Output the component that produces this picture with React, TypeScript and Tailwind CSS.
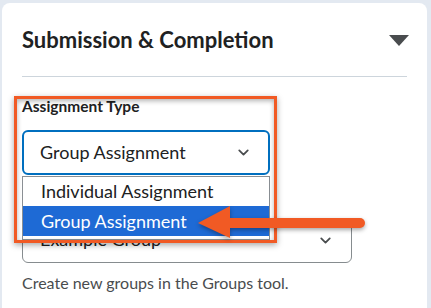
import { ChevronDown } from "lucide-react";

export default function App() {
  return (
    <div className="w-[431px] h-[308px] overflow-hidden bg-[#e3e9f1] pt-[3px] pl-[2px] pr-[4px] font-['Lato','Liberation_Sans',sans-serif] text-[#202122]">
      <div className="relative bg-white rounded-t-[8px] h-[320px] px-5">
        {/* header */}
        <div className="flex items-center justify-between h-[73px]">
          <h2 className="text-[22px] leading-[28px] font-bold">Submission &amp; Completion</h2>
          <svg width="20" height="11" viewBox="0 0 20 11" className="mr-[-2px] mt-[2px]">
            <polygon points="0,0 20,0 10,11" fill="#494c4e" />
          </svg>
        </div>
        <div className="h-px bg-[#cdd5dc]" />

        {/* assignment type */}
        <div className="mt-[19px] text-[15.5px] leading-[20px] font-bold">Assignment Type</div>
        <div className="mt-[14px] w-[248px] h-[45px] border-2 border-[#006fbf] rounded-[6px] flex items-center justify-between pl-[16px] pr-[16px] text-[18px]">
          <span>Group Assignment</span>
          <ChevronDown size={17} strokeWidth={2.5} className="text-[#494c4e]" />
        </div>

        {/* group category (covered by dropdown) */}
        <div className="mt-[10px] text-[15.5px] leading-[20px] font-bold">Group Category</div>
        <div className="mt-[13px] w-[330px] h-[45px] border border-[#868c8f] rounded-[6px] flex items-center justify-between pl-[17px] pr-[17px] text-[18px]">
          <span className="mt-[-2px]">Example Group</span>
          <ChevronDown size={17} strokeWidth={2.5} className="text-[#494c4e]" />
        </div>
        <p className="mt-[10px] text-[16px] leading-[20px] text-[#494c4e]">Create new groups in the Groups tool.</p>

        {/* open list */}
        <div className="absolute left-[20px] top-[173px] w-[248px] bg-white border border-[#8a8f94] text-[18px]">
          <div className="h-[29px] flex items-center pl-[18px]">Individual Assignment</div>
          <div className="h-[30px] flex items-center pl-[18px] bg-[#1e6ad5] text-white">Group Assignment</div>
          <div className="h-[3px]" />
        </div>

        {/* highlight box */}
        <div className="absolute left-[12px] top-[93px] w-[263px] h-[147px] border-[3px] border-[#f15a24] shadow-[0_2px_6px_rgba(0,0,0,0.35),inset_0_2px_5px_rgba(0,0,0,0.3)]" />

        {/* arrow */}
        <svg className="absolute left-[188px] top-[197px] drop-shadow-[0_2px_2px_rgba(0,0,0,0.35)]" width="180" height="44" viewBox="0 0 180 44">
          <line x1="36" y1="23" x2="170" y2="23" stroke="#f15a24" strokeWidth="10" strokeLinecap="round" />
          <polygon points="8,23 40,6 40,38" fill="#f15a24" />
        </svg>
      </div>
    </div>
  );
}
